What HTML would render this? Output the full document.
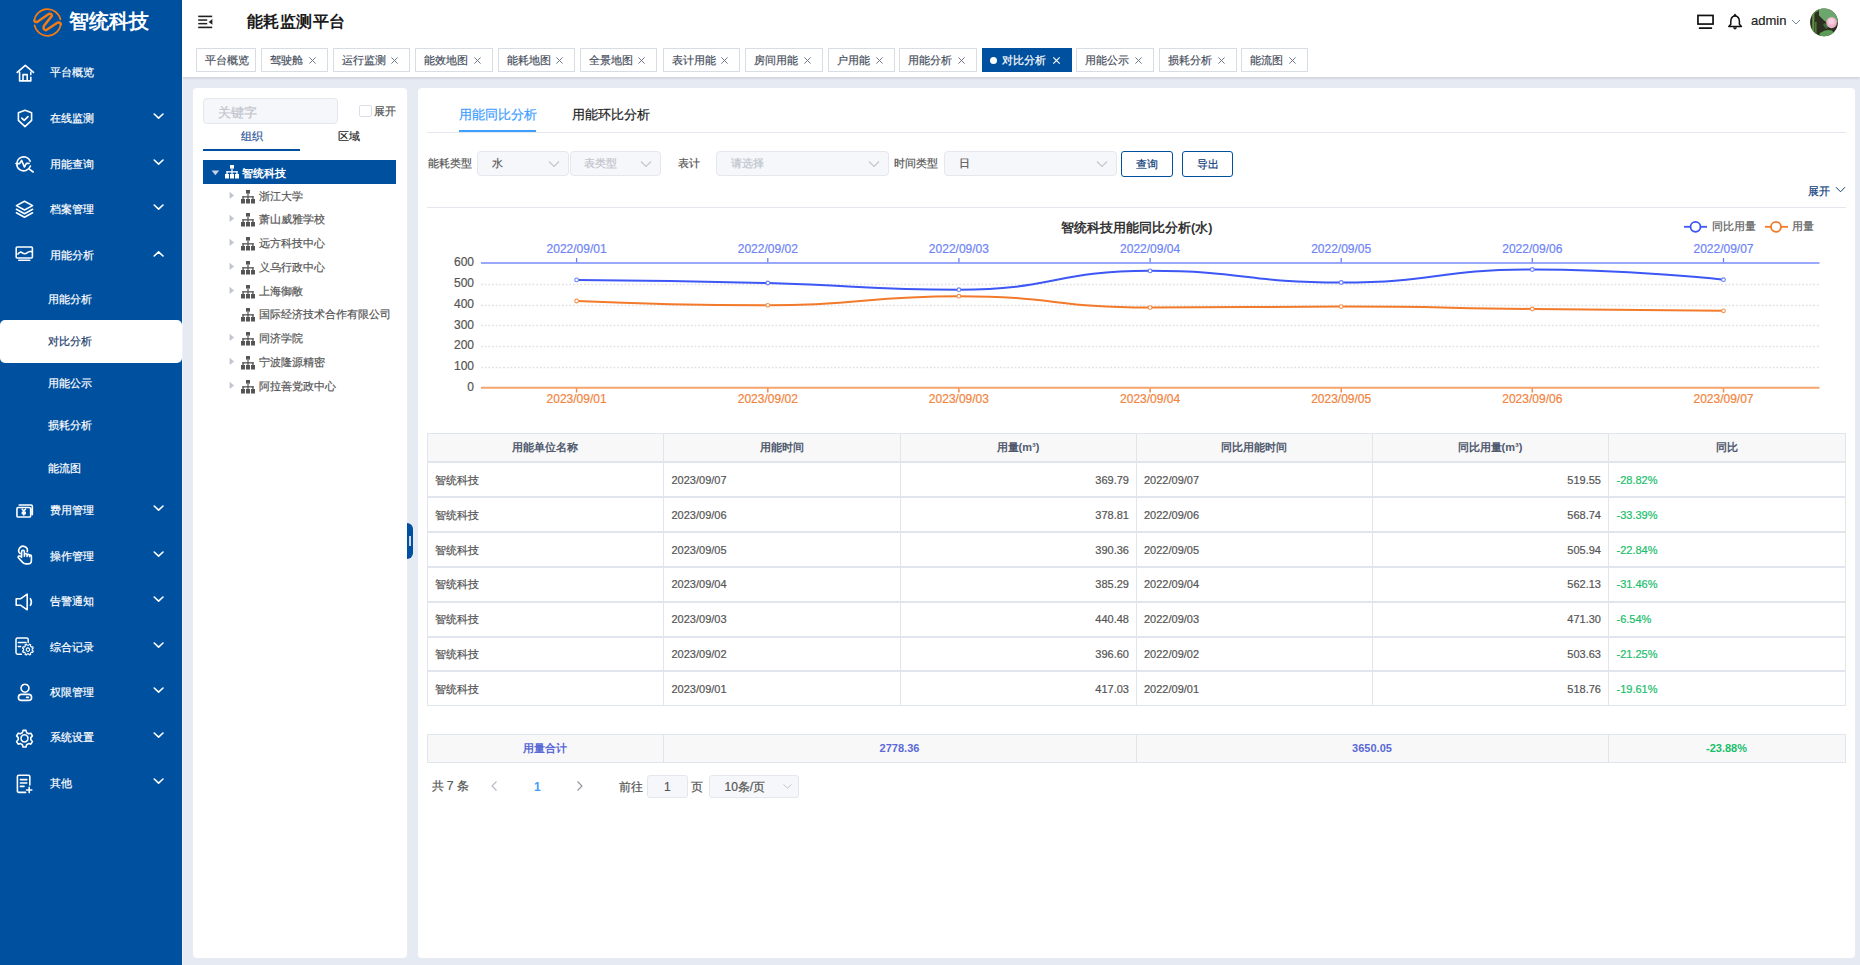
<!DOCTYPE html>
<html><head><meta charset="utf-8"><title>能耗监测平台</title>
<style>

*{box-sizing:border-box;margin:0;padding:0}
html,body{width:1860px;height:965px;overflow:hidden;background:#e6eaf3;font-family:"Liberation Sans",sans-serif;color:#606266}
.a{position:absolute}
.t{position:absolute;white-space:nowrap;line-height:1;-webkit-text-stroke:0.2px currentColor}
.t[style*="bold"]{-webkit-text-stroke:0}
#side{position:absolute;left:0;top:0;width:182px;height:965px;background:#0050a0}
#head{position:absolute;left:182px;top:0;width:1678px;height:77px;background:#fff;box-shadow:0 1px 3px 0 rgba(0,0,0,.12),0 0 3px 0 rgba(0,0,0,.04)}
.tag{position:absolute;top:48px;height:24px;border:1px solid #d8dce5;background:#fff;color:#495060;font-size:11px}
.tag .tx{position:absolute;top:5.6px;line-height:11px;white-space:nowrap;-webkit-text-stroke:0.2px currentColor}
.panel{position:absolute;background:#fff;border-radius:4px}

</style></head><body>
<div id="side"></div>
<svg class="a" style="left:28px;top:4px" width="40" height="38" viewBox="0 0 40 38" fill="none" stroke="#f47b14" stroke-linecap="round" stroke-linejoin="round">
<path d="M32.4 15.3 A13.3 13.3 0 0 0 6.3 16.6" stroke-width="1.7"/>
<path d="M6.6 21.4 A13.3 13.3 0 0 0 32.8 20" stroke-width="1.7"/>
<path d="M6.4 16.6 Q7.2 18.8 9.8 17.6 L20.4 10.2 Q23.4 8.8 23.9 11.9 L15.8 22 Q14.8 25.9 18 26.3 L29.4 18.7 Q32.3 17.9 32.8 20.2" stroke-width="2.5"/>
</svg>
<div class="t" style="left:69px;top:10px;font-size:20px;font-weight:bold;color:#fff;line-height:22px">智统科技</div>
<svg class="a" style="left:15.5px;top:63.5px;" width="19" height="19" viewBox="0 0 19 19" fill="none" stroke="#fff" stroke-width="1.6" stroke-linecap="round" stroke-linejoin="round"><path d="M1.2 8.4 L9.3 1.3 L17.5 8.4 M3.6 8.2 V16.9 H14.8 V13.4 M14.8 10.6 V8.2 M7 16.9 V10.6 H11.2 V16.9"/></svg>
<div class="t" style="left:50px;top:65.5px;font-size:11px;color:#fff;line-height:13px">平台概览</div>
<svg class="a" style="left:16.5px;top:109px;" width="16" height="19" viewBox="0 0 16 19" fill="none" stroke="#fff" stroke-width="1.6" stroke-linecap="round" stroke-linejoin="round"><path d="M8 1.2 L14.6 3.8 V11.4 L8 17.6 L1.4 11.4 V3.8 Z M4.8 9.1 L7.2 11.4 L11 7.6"/></svg>
<div class="t" style="left:50px;top:111.5px;font-size:11px;color:#fff;line-height:13px">在线监测</div>
<svg class="a" style="left:151.5px;top:112.5px;" width="13" height="7" viewBox="0 0 13 7" fill="none" stroke="#fff" stroke-width="1.6" stroke-linecap="round" stroke-linejoin="round"><path d="M2.2 1 L6.6 5.2 L11 1"/></svg>
<svg class="a" style="left:15px;top:154.5px;" width="20" height="18" viewBox="0 0 20 18" fill="none" stroke="#fff" stroke-width="1.6" stroke-linecap="round" stroke-linejoin="round"><path d="M15.2 6.2 A7 7 0 1 0 15.4 11 M1 8.6 H4.6 L6.6 5.4 L9.4 12 L11.4 8.4 H14 M13.6 13.6 L18.2 17"/></svg>
<div class="t" style="left:50px;top:157.5px;font-size:11px;color:#fff;line-height:13px">用能查询</div>
<svg class="a" style="left:151.5px;top:158.5px;" width="13" height="7" viewBox="0 0 13 7" fill="none" stroke="#fff" stroke-width="1.6" stroke-linecap="round" stroke-linejoin="round"><path d="M2.2 1 L6.6 5.2 L11 1"/></svg>
<svg class="a" style="left:15.3px;top:200px;" width="19" height="19" viewBox="0 0 19 19" fill="none" stroke="#fff" stroke-width="1.6" stroke-linecap="round" stroke-linejoin="round"><path d="M9.5 1.2 L17.6 5.6 L9.5 10 L1.4 5.6 Z M1.4 9.3 L9.5 13.7 L17.6 9.3 M1.4 12.8 L9.5 17.2 L17.6 12.8"/></svg>
<div class="t" style="left:50px;top:203.0px;font-size:11px;color:#fff;line-height:13px">档案管理</div>
<svg class="a" style="left:151.5px;top:204.0px;" width="13" height="7" viewBox="0 0 13 7" fill="none" stroke="#fff" stroke-width="1.6" stroke-linecap="round" stroke-linejoin="round"><path d="M2.2 1 L6.6 5.2 L11 1"/></svg>
<svg class="a" style="left:15.3px;top:246.3px;" width="19" height="16" viewBox="0 0 19 16" fill="none" stroke="#fff" stroke-width="1.6" stroke-linecap="round" stroke-linejoin="round"><path d="M2.2 1 H16.4 Q17.4 1 17.4 2 V11 Q17.4 12 16.4 12 H2.2 Q1.2 12 1.2 11 V2 Q1.2 1 2.2 1 Z M3 8 Q5 5 7.4 6.8 T12 6.8 T16 5.6 M3.8 14.2 H14.8"/></svg>
<div class="t" style="left:50px;top:249.0px;font-size:11px;color:#fff;line-height:13px">用能分析</div>
<svg class="a" style="left:151.5px;top:249.5px;" width="13" height="7" viewBox="0 0 13 7" fill="none" stroke="#fff" stroke-width="1.6" stroke-linecap="round" stroke-linejoin="round"><path d="M2.2 6 L6.6 1.8 L11 6"/></svg>
<svg class="a" style="left:15px;top:502.5px;" width="20" height="16" viewBox="0 0 20 16" fill="none" stroke="#fff" stroke-width="1.6" stroke-linecap="round" stroke-linejoin="round"><path d="M4.2 1.95 H16.1 Q17.35 1.95 17.35 3.2 V11.6 M2.95 4.45 H14.4 Q15.65 4.45 15.65 5.7 V12.9 Q15.65 13.95 14.4 13.95 H3.2 Q1.95 13.95 1.95 12.9 V5.7 Q1.95 4.45 3.2 4.45 Z M7.2 6.3 L8.8 8 L10.4 6.3 M8.8 8 V12 M7.3 9.3 H10.3 M7.3 10.8 H10.3"/></svg>
<div class="t" style="left:50px;top:503.5px;font-size:11px;color:#fff;line-height:13px">费用管理</div>
<svg class="a" style="left:151.5px;top:504.5px;" width="13" height="7" viewBox="0 0 13 7" fill="none" stroke="#fff" stroke-width="1.6" stroke-linecap="round" stroke-linejoin="round"><path d="M2.2 1 L6.6 5.2 L11 1"/></svg>
<svg class="a" style="left:12px;top:540px;" width="26" height="30" viewBox="0 0 26 30" fill="none" stroke="#fff" stroke-width="1.6" stroke-linecap="round" stroke-linejoin="round"><path d="M8 13.5 A4.3 4.3 0 1 1 15.2 11.8 M9.6 17.2 V11.9 Q9.6 10.3 11 10.3 Q12.4 10.3 12.4 11.9 V16.2 M12.4 14.8 Q12.4 13.7 13.8 13.7 Q15.1 13.7 15.1 14.8 V16.4 M15.1 15.4 Q15.1 14.4 16.4 14.4 Q17.6 14.4 17.6 15.4 V16.6 M17.6 16 Q17.6 15.1 18.5 15.1 Q19.4 15.1 19.4 16.2 V20.4 Q19.4 23.9 15.8 23.9 H14 Q12 23.9 10.6 22.4 L6.4 17.8 Q5.7 16.6 6.9 16.1 Q8 15.8 9.6 17.2"/></svg>
<div class="t" style="left:50px;top:549.5px;font-size:11px;color:#fff;line-height:13px">操作管理</div>
<svg class="a" style="left:151.5px;top:550.5px;" width="13" height="7" viewBox="0 0 13 7" fill="none" stroke="#fff" stroke-width="1.6" stroke-linecap="round" stroke-linejoin="round"><path d="M2.2 1 L6.6 5.2 L11 1"/></svg>
<svg class="a" style="left:15.3px;top:592.8px;" width="19" height="18" viewBox="0 0 19 18" fill="none" stroke="#fff" stroke-width="1.6" stroke-linecap="round" stroke-linejoin="round"><path d="M1.2 5.8 H5.4 L12.2 1.2 V16.8 L5.4 12.2 H1.2 Z M15.4 5.6 Q17.4 9 15.4 12.4"/></svg>
<div class="t" style="left:50px;top:594.5px;font-size:11px;color:#fff;line-height:13px">告警通知</div>
<svg class="a" style="left:151.5px;top:595.5px;" width="13" height="7" viewBox="0 0 13 7" fill="none" stroke="#fff" stroke-width="1.6" stroke-linecap="round" stroke-linejoin="round"><path d="M2.2 1 L6.6 5.2 L11 1"/></svg>
<svg class="a" style="left:12px;top:634px;" width="26" height="26" viewBox="0 0 26 26" fill="none" stroke="#fff" stroke-width="1.6" stroke-linecap="round" stroke-linejoin="round"><path d="M9.4 20.2 H5.6 Q4 20.2 4 18.6 V5.6 Q4 4 5.6 4 H14.6 Q16.2 4 16.2 5.6 V8.4 M6.3 8.6 H14 M6.3 12.4 H8.6" stroke-width="1.5"/><path stroke-width="1.15" d="M20.23 16.37 L21.31 17.06 L20.75 18.39 L19.51 18.12 L18.42 19.21 L18.69 20.45 L17.36 21.01 L16.67 19.93 L15.13 19.93 L14.44 21.01 L13.11 20.45 L13.38 19.21 L12.29 18.12 L11.05 18.39 L10.49 17.06 L11.57 16.37 L11.57 14.83 L10.49 14.14 L11.05 12.81 L12.29 13.08 L13.38 11.99 L13.11 10.75 L14.44 10.19 L15.13 11.27 L16.67 11.27 L17.36 10.19 L18.69 10.75 L18.42 11.99 L19.51 13.08 L20.75 12.81 L21.31 14.14 L20.23 14.83 Z M15.9 13.9 A1.7 1.7 0 1 1 15.89 13.9 Z"/></svg>
<div class="t" style="left:50px;top:640.5px;font-size:11px;color:#fff;line-height:13px">综合记录</div>
<svg class="a" style="left:151.5px;top:641.5px;" width="13" height="7" viewBox="0 0 13 7" fill="none" stroke="#fff" stroke-width="1.6" stroke-linecap="round" stroke-linejoin="round"><path d="M2.2 1 L6.6 5.2 L11 1"/></svg>
<svg class="a" style="left:16.5px;top:683.2px;" width="16" height="19" viewBox="0 0 16 19" fill="none" stroke="#fff" stroke-width="1.6" stroke-linecap="round" stroke-linejoin="round"><path d="M8 1.2 A4 4 0 1 1 7.99 1.2 Z M4.4 11.4 H11.6 Q14.6 11.4 14.6 14.4 Q14.6 17.4 11.6 17.4 H4.4 Q1.4 17.4 1.4 14.4 Q1.4 11.4 4.4 11.4 Z M9.6 14.4 H11.4"/></svg>
<div class="t" style="left:50px;top:685.5px;font-size:11px;color:#fff;line-height:13px">权限管理</div>
<svg class="a" style="left:151.5px;top:686.5px;" width="13" height="7" viewBox="0 0 13 7" fill="none" stroke="#fff" stroke-width="1.6" stroke-linecap="round" stroke-linejoin="round"><path d="M2.2 1 L6.6 5.2 L11 1"/></svg>
<svg class="a" style="left:15.1px;top:729px;" width="19" height="19" viewBox="0 0 19 19" fill="none" stroke="#fff" stroke-width="1.6" stroke-linecap="round" stroke-linejoin="round"><path d="M9.5 5.8 A3.6 3.6 0 1 1 9.49 5.8 Z M8 1.4 H11 L11.6 3.6 L13.6 4.8 L15.8 4.2 L17.4 6.9 L15.8 8.6 V10.8 L17.4 12.5 L15.8 15.2 L13.6 14.6 L11.6 15.8 L11 18 H8 L7.4 15.8 L5.4 14.6 L3.2 15.2 L1.6 12.5 L3.2 10.8 V8.6 L1.6 6.9 L3.2 4.2 L5.4 4.8 L7.4 3.6 Z"/></svg>
<div class="t" style="left:50px;top:731.1px;font-size:11px;color:#fff;line-height:13px">系统设置</div>
<svg class="a" style="left:151.5px;top:732.1px;" width="13" height="7" viewBox="0 0 13 7" fill="none" stroke="#fff" stroke-width="1.6" stroke-linecap="round" stroke-linejoin="round"><path d="M2.2 1 L6.6 5.2 L11 1"/></svg>
<svg class="a" style="left:15.7px;top:773.9px;" width="18" height="20" viewBox="0 0 18 20" fill="none" stroke="#fff" stroke-width="1.6" stroke-linecap="round" stroke-linejoin="round"><path d="M9.6 18.4 H2.8 Q1.4 18.4 1.4 17 V2.6 Q1.4 1.2 2.8 1.2 H12.4 Q13.8 1.2 13.8 2.6 V11 M4.4 5.6 H10.8 M4.4 9 H10.8 M4.4 12.4 H8 M13.2 13.4 V18.6 M10.6 16 H15.8"/></svg>
<div class="t" style="left:50px;top:776.5px;font-size:11px;color:#fff;line-height:13px">其他</div>
<svg class="a" style="left:151.5px;top:777.5px;" width="13" height="7" viewBox="0 0 13 7" fill="none" stroke="#fff" stroke-width="1.6" stroke-linecap="round" stroke-linejoin="round"><path d="M2.2 1 L6.6 5.2 L11 1"/></svg>
<div class="a" style="left:0;top:320px;width:182px;height:43px;background:#fff;border-radius:5px"></div>
<div class="t" style="left:47.7px;top:292.5px;font-size:11px;color:#fff;line-height:13px">用能分析</div>
<div class="t" style="left:47.7px;top:334.5px;font-size:11px;color:#1d3d6e;line-height:13px">对比分析</div>
<div class="t" style="left:47.7px;top:376.5px;font-size:11px;color:#fff;line-height:13px">用能公示</div>
<div class="t" style="left:47.7px;top:418.5px;font-size:11px;color:#fff;line-height:13px">损耗分析</div>
<div class="t" style="left:47.7px;top:461.5px;font-size:11px;color:#fff;line-height:13px">能流图</div>
<div id="head"></div>
<div class="a" style="left:182px;top:77px;width:1px;height:888px;background:#f1f3f8"></div>
<svg class="a" style="left:197px;top:14px" width="17" height="16" viewBox="0 0 17 16" fill="#222">
<rect x="1.2" y="1.6" width="14" height="1.6"/><rect x="1.2" y="12.6" width="14" height="1.6"/>
<rect x="1.2" y="5.3" width="9" height="1.5"/><rect x="1.2" y="8.9" width="9" height="1.5"/>
<path d="M15.4 5 L11.6 7.9 L15.4 10.8 Z"/></svg>
<div class="t" style="left:246.5px;top:11px;font-size:16.3px;letter-spacing:0.6px;font-weight:bold;color:#1b1b1b;line-height:20px">能耗监测平台</div>
<svg class="a" style="left:1696px;top:13px" width="20" height="18" viewBox="0 0 20 18" fill="none" stroke="#111" stroke-width="1.7">
<rect x="1.95" y="2.45" width="15.1" height="8.6"/><path d="M3.6 15.2 H15.4" stroke-width="1.7" stroke-linecap="round"/></svg>
<svg class="a" style="left:1726px;top:13px" width="18" height="19" viewBox="0 0 18 19" fill="none" stroke="#111" stroke-width="1.5" stroke-linejoin="round">
<path d="M9 2.8 Q5.2 3.4 4.8 8 V11.2 L2.8 13.4 H15.4 L13.4 11.2 V8 Q13 3.4 9 2.8 Z"/><path d="M9 1.3 L10 2.9 H8 Z" stroke-width="1.2"/><path d="M7.7 14.2 Q9 17.2 10.3 14.2"/></svg>
<div class="t" style="left:1751px;top:14px;font-size:13px;color:#222;line-height:14px">admin</div>
<svg class="a" style="left:1791px;top:18px" width="10" height="8" viewBox="0 0 10 8" fill="none" stroke="#7a8699" stroke-width="1"><path d="M1 2 L5 6 L9 2"/></svg>
<svg class="a" style="left:1809px;top:8px" width="30" height="30" viewBox="0 0 30 30">
<defs><clipPath id="av"><circle cx="15" cy="14.4" r="13.9"/></clipPath></defs>
<g clip-path="url(#av)">
<rect width="30" height="30" fill="#2d3020"/>
<path d="M10 0 H30 V15 Q24 12.5 19 15.5 Q14 12 10 7.5 Z" fill="#6ca66c"/>
<path d="M11 25 Q17 20.5 23 22.5 L28 30 H9 Z" fill="#5c9b58"/>
<path d="M0 0 H10 V3 Q6 4 4 8 L0 8Z" fill="#4f7d3e"/>
<rect x="3.2" y="5" width="2.2" height="22" fill="#5e8f45"/>
<rect x="6" y="14" width="1.6" height="14" fill="#4d7a3a"/>
<path d="M14 16 Q17 14 20 17 L18 21 Q15 20 14 16Z" fill="#3f6a3a"/>
<ellipse cx="22.6" cy="14.6" rx="5.3" ry="5.6" fill="#eeb3cb"/>
<ellipse cx="22.4" cy="13.4" rx="3.2" ry="3.2" fill="#f7cfe0"/>
</g></svg>
<div class="tag" style="left:196px;width:60px"><div class="tx" style="left:8px">平台概览</div></div>
<div class="tag" style="left:261px;width:67px"><div class="tx" style="left:8px">驾驶舱</div><svg class="a" style="right:10.5px;top:6.6px" width="9" height="9" viewBox="0 0 9 9" stroke="#6a7280" stroke-width="0.95"><path d="M1.4 1.4 L7.6 7.6 M7.6 1.4 L1.4 7.6"/></svg></div>
<div class="tag" style="left:333px;width:77px"><div class="tx" style="left:8px">运行监测</div><svg class="a" style="right:10.5px;top:6.6px" width="9" height="9" viewBox="0 0 9 9" stroke="#6a7280" stroke-width="0.95"><path d="M1.4 1.4 L7.6 7.6 M7.6 1.4 L1.4 7.6"/></svg></div>
<div class="tag" style="left:415px;width:78px"><div class="tx" style="left:8px">能效地图</div><svg class="a" style="right:10.5px;top:6.6px" width="9" height="9" viewBox="0 0 9 9" stroke="#6a7280" stroke-width="0.95"><path d="M1.4 1.4 L7.6 7.6 M7.6 1.4 L1.4 7.6"/></svg></div>
<div class="tag" style="left:498px;width:77px"><div class="tx" style="left:8px">能耗地图</div><svg class="a" style="right:10.5px;top:6.6px" width="9" height="9" viewBox="0 0 9 9" stroke="#6a7280" stroke-width="0.95"><path d="M1.4 1.4 L7.6 7.6 M7.6 1.4 L1.4 7.6"/></svg></div>
<div class="tag" style="left:580px;width:77px"><div class="tx" style="left:8px">全景地图</div><svg class="a" style="right:10.5px;top:6.6px" width="9" height="9" viewBox="0 0 9 9" stroke="#6a7280" stroke-width="0.95"><path d="M1.4 1.4 L7.6 7.6 M7.6 1.4 L1.4 7.6"/></svg></div>
<div class="tag" style="left:663px;width:77px"><div class="tx" style="left:8px">表计用能</div><svg class="a" style="right:10.5px;top:6.6px" width="9" height="9" viewBox="0 0 9 9" stroke="#6a7280" stroke-width="0.95"><path d="M1.4 1.4 L7.6 7.6 M7.6 1.4 L1.4 7.6"/></svg></div>
<div class="tag" style="left:745px;width:78px"><div class="tx" style="left:8px">房间用能</div><svg class="a" style="right:10.5px;top:6.6px" width="9" height="9" viewBox="0 0 9 9" stroke="#6a7280" stroke-width="0.95"><path d="M1.4 1.4 L7.6 7.6 M7.6 1.4 L1.4 7.6"/></svg></div>
<div class="tag" style="left:828px;width:67px"><div class="tx" style="left:8px">户用能</div><svg class="a" style="right:10.5px;top:6.6px" width="9" height="9" viewBox="0 0 9 9" stroke="#6a7280" stroke-width="0.95"><path d="M1.4 1.4 L7.6 7.6 M7.6 1.4 L1.4 7.6"/></svg></div>
<div class="tag" style="left:899px;width:78px"><div class="tx" style="left:8px">用能分析</div><svg class="a" style="right:10.5px;top:6.6px" width="9" height="9" viewBox="0 0 9 9" stroke="#6a7280" stroke-width="0.95"><path d="M1.4 1.4 L7.6 7.6 M7.6 1.4 L1.4 7.6"/></svg></div>
<div class="tag" style="left:982px;width:90px;background:#0050a0;border-color:#0050a0;color:#fff"><div class="a" style="left:7px;top:8px;width:7px;height:7px;border-radius:50%;background:#fff"></div><div class="tx" style="left:19px">对比分析</div><svg class="a" style="left:69px;top:7px" width="9" height="9" viewBox="0 0 9 9" stroke="#fff" stroke-width="1.2"><path d="M1.3 1.3 L7.7 7.7 M7.7 1.3 L1.3 7.7"/></svg></div>
<div class="tag" style="left:1076px;width:78px"><div class="tx" style="left:8px">用能公示</div><svg class="a" style="right:10.5px;top:6.6px" width="9" height="9" viewBox="0 0 9 9" stroke="#6a7280" stroke-width="0.95"><path d="M1.4 1.4 L7.6 7.6 M7.6 1.4 L1.4 7.6"/></svg></div>
<div class="tag" style="left:1159px;width:78px"><div class="tx" style="left:8px">损耗分析</div><svg class="a" style="right:10.5px;top:6.6px" width="9" height="9" viewBox="0 0 9 9" stroke="#6a7280" stroke-width="0.95"><path d="M1.4 1.4 L7.6 7.6 M7.6 1.4 L1.4 7.6"/></svg></div>
<div class="tag" style="left:1241px;width:67px"><div class="tx" style="left:8px">能流图</div><svg class="a" style="right:10.5px;top:6.6px" width="9" height="9" viewBox="0 0 9 9" stroke="#6a7280" stroke-width="0.95"><path d="M1.4 1.4 L7.6 7.6 M7.6 1.4 L1.4 7.6"/></svg></div>
<div class="panel" style="left:193px;top:88px;width:214px;height:870px"></div>
<div class="a" style="left:203px;top:98px;width:135px;height:26px;background:#f5f7fa;border:1px solid #e4e7ed;border-radius:4px"></div>
<div class="t" style="left:218px;top:105px;font-size:13px;color:#c0c4cc;line-height:15px">关键字</div>
<div class="a" style="left:359px;top:104.5px;width:12.5px;height:12.5px;border:1px solid #dcdfe6;border-radius:2px;background:#fff"></div>
<div class="t" style="left:374px;top:104.5px;font-size:11px;color:#555;line-height:13px">展开</div>
<div class="t" style="left:240.5px;top:130px;font-size:11px;color:#2c5697;line-height:13px">组织</div>
<div class="t" style="left:337.5px;top:130px;font-size:11px;color:#222;line-height:13px">区域</div>
<div class="a" style="left:203px;top:149px;width:97px;height:2px;background:#0050a0"></div>
<div class="a" style="left:203px;top:160px;width:193px;height:24px;background:#0050a0"></div>
<svg class="a" style="left:211px;top:170px" width="9" height="6" viewBox="0 0 9 6" fill="#c9d3e3"><path d="M0.6 0.6 H8.2 L4.4 5.2 Z"/></svg>
<svg class="a" style="left:224.5px;top:165px" width="14" height="14" viewBox="0 0 14 14" fill="#fff"><rect x="5" y="0" width="4" height="3.6"/><rect x="6.4" y="3.6" width="1.2" height="3"/><rect x="1.4" y="6.2" width="11.2" height="1.3"/><rect x="1.4" y="6.2" width="1.3" height="3"/><rect x="6.4" y="6.2" width="1.2" height="3"/><rect x="11.3" y="6.2" width="1.3" height="3"/><rect x="0" y="9" width="4" height="4.5"/><rect x="5" y="9" width="4" height="4.5"/><rect x="10" y="9" width="4" height="4.5"/></svg>
<div class="t" style="left:242px;top:166.5px;font-size:11px;font-weight:bold;color:#fff;line-height:13px">智统科技</div>
<svg class="a" style="left:228.5px;top:190.50px" width="6" height="9" viewBox="0 0 6 9" fill="#c0c4cc"><path d="M0.6 0.8 L5 4.4 L0.6 8 Z"/></svg>
<svg class="a" style="left:241px;top:189.5px" width="14" height="14" viewBox="0 0 14 14" fill="#555"><rect x="5" y="0" width="4" height="3.6"/><rect x="6.4" y="3.6" width="1.2" height="3"/><rect x="1.4" y="6.2" width="11.2" height="1.3"/><rect x="1.4" y="6.2" width="1.3" height="3"/><rect x="6.4" y="6.2" width="1.2" height="3"/><rect x="11.3" y="6.2" width="1.3" height="3"/><rect x="0" y="9" width="4" height="4.5"/><rect x="5" y="9" width="4" height="4.5"/><rect x="10" y="9" width="4" height="4.5"/></svg>
<div class="t" style="left:258.5px;top:189.50px;font-size:11px;color:#555;line-height:13px">浙江大学</div>
<svg class="a" style="left:228.5px;top:214.28px" width="6" height="9" viewBox="0 0 6 9" fill="#c0c4cc"><path d="M0.6 0.8 L5 4.4 L0.6 8 Z"/></svg>
<svg class="a" style="left:241px;top:213.28px" width="14" height="14" viewBox="0 0 14 14" fill="#555"><rect x="5" y="0" width="4" height="3.6"/><rect x="6.4" y="3.6" width="1.2" height="3"/><rect x="1.4" y="6.2" width="11.2" height="1.3"/><rect x="1.4" y="6.2" width="1.3" height="3"/><rect x="6.4" y="6.2" width="1.2" height="3"/><rect x="11.3" y="6.2" width="1.3" height="3"/><rect x="0" y="9" width="4" height="4.5"/><rect x="5" y="9" width="4" height="4.5"/><rect x="10" y="9" width="4" height="4.5"/></svg>
<div class="t" style="left:258.5px;top:213.28px;font-size:11px;color:#555;line-height:13px">萧山威雅学校</div>
<svg class="a" style="left:228.5px;top:238.06px" width="6" height="9" viewBox="0 0 6 9" fill="#c0c4cc"><path d="M0.6 0.8 L5 4.4 L0.6 8 Z"/></svg>
<svg class="a" style="left:241px;top:237.06px" width="14" height="14" viewBox="0 0 14 14" fill="#555"><rect x="5" y="0" width="4" height="3.6"/><rect x="6.4" y="3.6" width="1.2" height="3"/><rect x="1.4" y="6.2" width="11.2" height="1.3"/><rect x="1.4" y="6.2" width="1.3" height="3"/><rect x="6.4" y="6.2" width="1.2" height="3"/><rect x="11.3" y="6.2" width="1.3" height="3"/><rect x="0" y="9" width="4" height="4.5"/><rect x="5" y="9" width="4" height="4.5"/><rect x="10" y="9" width="4" height="4.5"/></svg>
<div class="t" style="left:258.5px;top:237.06px;font-size:11px;color:#555;line-height:13px">远方科技中心</div>
<svg class="a" style="left:228.5px;top:261.84px" width="6" height="9" viewBox="0 0 6 9" fill="#c0c4cc"><path d="M0.6 0.8 L5 4.4 L0.6 8 Z"/></svg>
<svg class="a" style="left:241px;top:260.84000000000003px" width="14" height="14" viewBox="0 0 14 14" fill="#555"><rect x="5" y="0" width="4" height="3.6"/><rect x="6.4" y="3.6" width="1.2" height="3"/><rect x="1.4" y="6.2" width="11.2" height="1.3"/><rect x="1.4" y="6.2" width="1.3" height="3"/><rect x="6.4" y="6.2" width="1.2" height="3"/><rect x="11.3" y="6.2" width="1.3" height="3"/><rect x="0" y="9" width="4" height="4.5"/><rect x="5" y="9" width="4" height="4.5"/><rect x="10" y="9" width="4" height="4.5"/></svg>
<div class="t" style="left:258.5px;top:260.84px;font-size:11px;color:#555;line-height:13px">义乌行政中心</div>
<svg class="a" style="left:228.5px;top:285.62px" width="6" height="9" viewBox="0 0 6 9" fill="#c0c4cc"><path d="M0.6 0.8 L5 4.4 L0.6 8 Z"/></svg>
<svg class="a" style="left:241px;top:284.62px" width="14" height="14" viewBox="0 0 14 14" fill="#555"><rect x="5" y="0" width="4" height="3.6"/><rect x="6.4" y="3.6" width="1.2" height="3"/><rect x="1.4" y="6.2" width="11.2" height="1.3"/><rect x="1.4" y="6.2" width="1.3" height="3"/><rect x="6.4" y="6.2" width="1.2" height="3"/><rect x="11.3" y="6.2" width="1.3" height="3"/><rect x="0" y="9" width="4" height="4.5"/><rect x="5" y="9" width="4" height="4.5"/><rect x="10" y="9" width="4" height="4.5"/></svg>
<div class="t" style="left:258.5px;top:284.62px;font-size:11px;color:#555;line-height:13px">上海御敞</div>
<svg class="a" style="left:241px;top:308.4px" width="14" height="14" viewBox="0 0 14 14" fill="#555"><rect x="5" y="0" width="4" height="3.6"/><rect x="6.4" y="3.6" width="1.2" height="3"/><rect x="1.4" y="6.2" width="11.2" height="1.3"/><rect x="1.4" y="6.2" width="1.3" height="3"/><rect x="6.4" y="6.2" width="1.2" height="3"/><rect x="11.3" y="6.2" width="1.3" height="3"/><rect x="0" y="9" width="4" height="4.5"/><rect x="5" y="9" width="4" height="4.5"/><rect x="10" y="9" width="4" height="4.5"/></svg>
<div class="t" style="left:258.5px;top:308.40px;font-size:11px;color:#555;line-height:13px">国际经济技术合作有限公司</div>
<svg class="a" style="left:228.5px;top:333.18px" width="6" height="9" viewBox="0 0 6 9" fill="#c0c4cc"><path d="M0.6 0.8 L5 4.4 L0.6 8 Z"/></svg>
<svg class="a" style="left:241px;top:332.18px" width="14" height="14" viewBox="0 0 14 14" fill="#555"><rect x="5" y="0" width="4" height="3.6"/><rect x="6.4" y="3.6" width="1.2" height="3"/><rect x="1.4" y="6.2" width="11.2" height="1.3"/><rect x="1.4" y="6.2" width="1.3" height="3"/><rect x="6.4" y="6.2" width="1.2" height="3"/><rect x="11.3" y="6.2" width="1.3" height="3"/><rect x="0" y="9" width="4" height="4.5"/><rect x="5" y="9" width="4" height="4.5"/><rect x="10" y="9" width="4" height="4.5"/></svg>
<div class="t" style="left:258.5px;top:332.18px;font-size:11px;color:#555;line-height:13px">同济学院</div>
<svg class="a" style="left:228.5px;top:356.96px" width="6" height="9" viewBox="0 0 6 9" fill="#c0c4cc"><path d="M0.6 0.8 L5 4.4 L0.6 8 Z"/></svg>
<svg class="a" style="left:241px;top:355.96000000000004px" width="14" height="14" viewBox="0 0 14 14" fill="#555"><rect x="5" y="0" width="4" height="3.6"/><rect x="6.4" y="3.6" width="1.2" height="3"/><rect x="1.4" y="6.2" width="11.2" height="1.3"/><rect x="1.4" y="6.2" width="1.3" height="3"/><rect x="6.4" y="6.2" width="1.2" height="3"/><rect x="11.3" y="6.2" width="1.3" height="3"/><rect x="0" y="9" width="4" height="4.5"/><rect x="5" y="9" width="4" height="4.5"/><rect x="10" y="9" width="4" height="4.5"/></svg>
<div class="t" style="left:258.5px;top:355.96px;font-size:11px;color:#555;line-height:13px">宁波隆源精密</div>
<svg class="a" style="left:228.5px;top:380.74px" width="6" height="9" viewBox="0 0 6 9" fill="#c0c4cc"><path d="M0.6 0.8 L5 4.4 L0.6 8 Z"/></svg>
<svg class="a" style="left:241px;top:379.74px" width="14" height="14" viewBox="0 0 14 14" fill="#555"><rect x="5" y="0" width="4" height="3.6"/><rect x="6.4" y="3.6" width="1.2" height="3"/><rect x="1.4" y="6.2" width="11.2" height="1.3"/><rect x="1.4" y="6.2" width="1.3" height="3"/><rect x="6.4" y="6.2" width="1.2" height="3"/><rect x="11.3" y="6.2" width="1.3" height="3"/><rect x="0" y="9" width="4" height="4.5"/><rect x="5" y="9" width="4" height="4.5"/><rect x="10" y="9" width="4" height="4.5"/></svg>
<div class="t" style="left:258.5px;top:379.74px;font-size:11px;color:#555;line-height:13px">阿拉善党政中心</div>
<div class="panel" style="left:418px;top:88px;width:1437px;height:870px"></div>
<div class="a" style="left:407px;top:523px;width:6px;height:36px;background:#0050a0;border-radius:0 6px 6px 0"></div>
<div class="a" style="left:409px;top:535.5px;width:1.8px;height:10.5px;background:#c9d6ea"></div>
<div class="t" style="left:459px;top:106.5px;font-size:13px;color:#409eff;line-height:15px">用能同比分析</div>
<div class="t" style="left:572px;top:106.5px;font-size:13px;color:#222;line-height:15px">用能环比分析</div>
<div class="a" style="left:427px;top:132px;width:1419px;height:1px;background:#e4e7ed"></div>
<div class="a" style="left:459px;top:129.5px;width:77px;height:2px;background:#409eff"></div>
<div class="t" style="left:427.5px;top:157px;font-size:11px;color:#555;line-height:13px">能耗类型</div>
<div class="a" style="left:477px;top:151px;width:91.5px;height:24.5px;background:#f5f7fa;border:1px solid #e4e7ed;border-radius:4px"></div>
<div class="t" style="left:491.5px;top:157px;font-size:11px;color:#555;line-height:13px">水</div>
<svg class="a" style="left:547.5px;top:159.5px" width="12" height="8" viewBox="0 0 12 8" fill="none" stroke="#c0c4cc" stroke-width="1.1"><path d="M1 1.5 L6 6.5 L11 1.5"/></svg>
<div class="a" style="left:569.5px;top:151px;width:91.5px;height:24.5px;background:#f5f7fa;border:1px solid #e4e7ed;border-radius:4px"></div>
<div class="t" style="left:584.0px;top:157px;font-size:11px;color:#c0c4cc;line-height:13px">表类型</div>
<svg class="a" style="left:639.5px;top:159.5px" width="12" height="8" viewBox="0 0 12 8" fill="none" stroke="#c0c4cc" stroke-width="1.1"><path d="M1 1.5 L6 6.5 L11 1.5"/></svg>
<div class="t" style="left:677.5px;top:157px;font-size:11px;color:#555;line-height:13px">表计</div>
<div class="a" style="left:716px;top:151px;width:173px;height:24.5px;background:#f5f7fa;border:1px solid #e4e7ed;border-radius:4px"></div>
<div class="t" style="left:730.5px;top:157px;font-size:11px;color:#c0c4cc;line-height:13px">请选择</div>
<svg class="a" style="left:867.5px;top:159.5px" width="12" height="8" viewBox="0 0 12 8" fill="none" stroke="#c0c4cc" stroke-width="1.1"><path d="M1 1.5 L6 6.5 L11 1.5"/></svg>
<div class="t" style="left:894px;top:157px;font-size:11px;color:#555;line-height:13px">时间类型</div>
<div class="a" style="left:944px;top:151px;width:173px;height:24.5px;background:#f5f7fa;border:1px solid #e4e7ed;border-radius:4px"></div>
<div class="t" style="left:958.5px;top:157px;font-size:11px;color:#555;line-height:13px">日</div>
<svg class="a" style="left:1095.5px;top:159.5px" width="12" height="8" viewBox="0 0 12 8" fill="none" stroke="#c0c4cc" stroke-width="1.1"><path d="M1 1.5 L6 6.5 L11 1.5"/></svg>
<div class="a" style="left:1121px;top:151px;width:52px;height:25.5px;border:1.5px solid #0050a0;border-radius:3px;background:#fff"></div>
<div class="t" style="left:1121px;width:52px;text-align:center;top:157.5px;font-size:11px;color:#0f3d7a;line-height:13px">查询</div>
<div class="a" style="left:1182px;top:151px;width:51px;height:25.5px;border:1.5px solid #0050a0;border-radius:3px;background:#fff"></div>
<div class="t" style="left:1182px;width:51px;text-align:center;top:157.5px;font-size:11px;color:#0f3d7a;line-height:13px">导出</div>
<div class="a" style="left:427px;top:207px;width:1419px;height:1px;background:#e4e7ed"></div>
<div class="t" style="left:1808px;top:184.5px;font-size:11px;color:#0f3d7a;line-height:13px">展开</div>
<svg class="a" style="left:1835px;top:186px" width="11" height="8" viewBox="0 0 11 8" fill="none" stroke="#0f3d7a" stroke-width="1"><path d="M1 1.2 L5.5 5.8 L10 1.2"/></svg>
<svg class="a" style="left:0;top:0" width="1860" height="965" viewBox="0 0 1860 965" fill="none">
<path d="M481 367.5 H1819.5" stroke="#e2e2e2" stroke-width="1.7" stroke-dasharray="1.84 1.84"/>
<path d="M481 346.5 H1819.5" stroke="#e2e2e2" stroke-width="1.7" stroke-dasharray="1.84 1.84"/>
<path d="M481 325.5 H1819.5" stroke="#e2e2e2" stroke-width="1.7" stroke-dasharray="1.84 1.84"/>
<path d="M481 305.5 H1819.5" stroke="#e2e2e2" stroke-width="1.7" stroke-dasharray="1.84 1.84"/>
<path d="M481 284.5 H1819.5" stroke="#e2e2e2" stroke-width="1.7" stroke-dasharray="1.84 1.84"/>
<path d="M481 263 H1819.5" stroke="#9aa8fb" stroke-width="2"/>
<path d="M481 387.8 H1819.5" stroke="#f6a46e" stroke-width="2"/>
<path d="M576.6 258 V262.5" stroke="#6c80f7" stroke-width="1.3"/>
<path d="M576.6 388.5 V392.5" stroke="#f3894a" stroke-width="1.5"/>
<path d="M767.8 258 V262.5" stroke="#6c80f7" stroke-width="1.3"/>
<path d="M767.8 388.5 V392.5" stroke="#f3894a" stroke-width="1.5"/>
<path d="M958.9 258 V262.5" stroke="#6c80f7" stroke-width="1.3"/>
<path d="M958.9 388.5 V392.5" stroke="#f3894a" stroke-width="1.5"/>
<path d="M1150.1 258 V262.5" stroke="#6c80f7" stroke-width="1.3"/>
<path d="M1150.1 388.5 V392.5" stroke="#f3894a" stroke-width="1.5"/>
<path d="M1341.2 258 V262.5" stroke="#6c80f7" stroke-width="1.3"/>
<path d="M1341.2 388.5 V392.5" stroke="#f3894a" stroke-width="1.5"/>
<path d="M1532.3 258 V262.5" stroke="#6c80f7" stroke-width="1.3"/>
<path d="M1532.3 388.5 V392.5" stroke="#f3894a" stroke-width="1.5"/>
<path d="M1723.5 258 V262.5" stroke="#6c80f7" stroke-width="1.3"/>
<path d="M1723.5 388.5 V392.5" stroke="#f3894a" stroke-width="1.5"/>
<path d="M576.60 279.88 C576.60 279.88 672.20 280.56 767.75 283.03 C863.35 285.50 863.53 289.75 958.90 289.75 C1054.68 289.75 1054.33 270.87 1150.05 270.87 C1245.48 270.87 1245.65 282.55 1341.20 282.55 C1436.80 282.55 1436.73 269.50 1532.35 269.50 C1627.88 269.50 1723.50 279.72 1723.50 279.72" stroke="#3c57f6" stroke-width="2"/>
<path d="M576.60 301.03 C576.60 301.03 672.22 305.27 767.75 305.27 C863.37 305.27 863.36 296.15 958.90 296.15 C1054.51 296.15 1054.39 307.62 1150.05 307.62 C1245.54 307.62 1245.63 306.57 1341.20 306.57 C1436.78 306.57 1436.77 307.90 1532.35 308.97 C1627.92 310.04 1723.50 310.85 1723.50 310.85" stroke="#f27a2a" stroke-width="2"/>
<circle cx="576.6" cy="279.9" r="1.85" fill="#fff" stroke="#6a80f7" stroke-width="1.1"/>
<circle cx="767.8" cy="283.0" r="1.85" fill="#fff" stroke="#6a80f7" stroke-width="1.1"/>
<circle cx="958.9" cy="289.7" r="1.85" fill="#fff" stroke="#6a80f7" stroke-width="1.1"/>
<circle cx="1150.1" cy="270.9" r="1.85" fill="#fff" stroke="#6a80f7" stroke-width="1.1"/>
<circle cx="1341.2" cy="282.5" r="1.85" fill="#fff" stroke="#6a80f7" stroke-width="1.1"/>
<circle cx="1532.3" cy="269.5" r="1.85" fill="#fff" stroke="#6a80f7" stroke-width="1.1"/>
<circle cx="1723.5" cy="279.7" r="1.85" fill="#fff" stroke="#6a80f7" stroke-width="1.1"/>
<circle cx="576.6" cy="301.0" r="1.85" fill="#fff" stroke="#f4914f" stroke-width="1.1"/>
<circle cx="767.8" cy="305.3" r="1.85" fill="#fff" stroke="#f4914f" stroke-width="1.1"/>
<circle cx="958.9" cy="296.2" r="1.85" fill="#fff" stroke="#f4914f" stroke-width="1.1"/>
<circle cx="1150.1" cy="307.6" r="1.85" fill="#fff" stroke="#f4914f" stroke-width="1.1"/>
<circle cx="1341.2" cy="306.6" r="1.85" fill="#fff" stroke="#f4914f" stroke-width="1.1"/>
<circle cx="1532.3" cy="309.0" r="1.85" fill="#fff" stroke="#f4914f" stroke-width="1.1"/>
<circle cx="1723.5" cy="310.8" r="1.85" fill="#fff" stroke="#f4914f" stroke-width="1.1"/>
<path d="M1684 226.8 H1707" stroke="#3c57f6" stroke-width="1.8"/><circle cx="1695.5" cy="226.8" r="5" fill="#fff" stroke="#3c57f6" stroke-width="1.8"/>
<path d="M1765 226.8 H1788" stroke="#f27a2a" stroke-width="1.8"/><circle cx="1776" cy="226.8" r="5" fill="#fff" stroke="#f27a2a" stroke-width="1.8"/>
</svg>
<div class="t" style="left:1711.5px;top:220px;font-size:11px;color:#5e5e5e;line-height:13px">同比用量</div>
<div class="t" style="left:1792px;top:220px;font-size:11px;color:#5e5e5e;line-height:13px">用量</div>
<div class="t" style="left:1061px;top:220px;font-size:12.5px;font-weight:bold;color:#333;line-height:16px">智统科技用能同比分析(水)</div>
<div class="t" style="left:536.6px;width:80px;text-align:center;top:241.5px;font-size:12px;color:#6e84f6;line-height:14px">2022/09/01</div>
<div class="t" style="left:536.6px;width:80px;text-align:center;top:391.5px;font-size:12px;color:#f2843e;line-height:14px">2023/09/01</div>
<div class="t" style="left:727.8px;width:80px;text-align:center;top:241.5px;font-size:12px;color:#6e84f6;line-height:14px">2022/09/02</div>
<div class="t" style="left:727.8px;width:80px;text-align:center;top:391.5px;font-size:12px;color:#f2843e;line-height:14px">2023/09/02</div>
<div class="t" style="left:918.9px;width:80px;text-align:center;top:241.5px;font-size:12px;color:#6e84f6;line-height:14px">2022/09/03</div>
<div class="t" style="left:918.9px;width:80px;text-align:center;top:391.5px;font-size:12px;color:#f2843e;line-height:14px">2023/09/03</div>
<div class="t" style="left:1110.1px;width:80px;text-align:center;top:241.5px;font-size:12px;color:#6e84f6;line-height:14px">2022/09/04</div>
<div class="t" style="left:1110.1px;width:80px;text-align:center;top:391.5px;font-size:12px;color:#f2843e;line-height:14px">2023/09/04</div>
<div class="t" style="left:1301.2px;width:80px;text-align:center;top:241.5px;font-size:12px;color:#6e84f6;line-height:14px">2022/09/05</div>
<div class="t" style="left:1301.2px;width:80px;text-align:center;top:391.5px;font-size:12px;color:#f2843e;line-height:14px">2023/09/05</div>
<div class="t" style="left:1492.3px;width:80px;text-align:center;top:241.5px;font-size:12px;color:#6e84f6;line-height:14px">2022/09/06</div>
<div class="t" style="left:1492.3px;width:80px;text-align:center;top:391.5px;font-size:12px;color:#f2843e;line-height:14px">2023/09/06</div>
<div class="t" style="left:1683.5px;width:80px;text-align:center;top:241.5px;font-size:12px;color:#6e84f6;line-height:14px">2022/09/07</div>
<div class="t" style="left:1683.5px;width:80px;text-align:center;top:391.5px;font-size:12px;color:#f2843e;line-height:14px">2023/09/07</div>
<div class="t" style="left:400px;width:74px;text-align:right;top:379.9px;font-size:12px;color:#555;line-height:14px">0</div>
<div class="t" style="left:400px;width:74px;text-align:right;top:359.1px;font-size:12px;color:#555;line-height:14px">100</div>
<div class="t" style="left:400px;width:74px;text-align:right;top:338.3px;font-size:12px;color:#555;line-height:14px">200</div>
<div class="t" style="left:400px;width:74px;text-align:right;top:317.6px;font-size:12px;color:#555;line-height:14px">300</div>
<div class="t" style="left:400px;width:74px;text-align:right;top:296.8px;font-size:12px;color:#555;line-height:14px">400</div>
<div class="t" style="left:400px;width:74px;text-align:right;top:276.0px;font-size:12px;color:#555;line-height:14px">500</div>
<div class="t" style="left:400px;width:74px;text-align:right;top:255.2px;font-size:12px;color:#555;line-height:14px">600</div>
<div class="a" style="left:427px;top:433px;width:1419px;height:28px;background:#f8f8f9"></div>
<div class="a" style="left:427px;top:433px;width:1419px;height:1px;background:#e1e6ee"></div>
<div class="a" style="left:427px;top:433px;width:1px;height:273px;background:#e1e6ee"></div>
<div class="a" style="left:663px;top:433px;width:1px;height:273px;background:#e1e6ee"></div>
<div class="a" style="left:900px;top:433px;width:1px;height:273px;background:#e1e6ee"></div>
<div class="a" style="left:1136px;top:433px;width:1px;height:273px;background:#e1e6ee"></div>
<div class="a" style="left:1372px;top:433px;width:1px;height:273px;background:#e1e6ee"></div>
<div class="a" style="left:1608px;top:433px;width:1px;height:273px;background:#e1e6ee"></div>
<div class="a" style="left:1845px;top:433px;width:1px;height:273px;background:#e1e6ee"></div>
<div class="a" style="left:427px;top:461px;width:1419px;height:2px;background:#e1e6ee"></div>
<div class="a" style="left:427px;top:496px;width:1419px;height:2px;background:#e1e6ee"></div>
<div class="a" style="left:427px;top:531px;width:1419px;height:2px;background:#e1e6ee"></div>
<div class="a" style="left:427px;top:566px;width:1419px;height:2px;background:#e1e6ee"></div>
<div class="a" style="left:427px;top:600.5px;width:1419px;height:2px;background:#e1e6ee"></div>
<div class="a" style="left:427px;top:635.5px;width:1419px;height:2px;background:#e1e6ee"></div>
<div class="a" style="left:427px;top:670px;width:1419px;height:2px;background:#e1e6ee"></div>
<div class="a" style="left:427px;top:705px;width:1419px;height:1px;background:#e1e6ee"></div>
<div class="t" style="left:427px;width:236px;text-align:center;top:440.5px;font-size:11px;font-weight:bold;color:#515a6e;line-height:13px">用能单位名称</div>
<div class="t" style="left:663px;width:237px;text-align:center;top:440.5px;font-size:11px;font-weight:bold;color:#515a6e;line-height:13px">用能时间</div>
<div class="t" style="left:900px;width:236px;text-align:center;top:440.5px;font-size:11px;font-weight:bold;color:#515a6e;line-height:13px">用量(m³)</div>
<div class="t" style="left:1136px;width:236px;text-align:center;top:440.5px;font-size:11px;font-weight:bold;color:#515a6e;line-height:13px">同比用能时间</div>
<div class="t" style="left:1372px;width:236px;text-align:center;top:440.5px;font-size:11px;font-weight:bold;color:#515a6e;line-height:13px">同比用量(m³)</div>
<div class="t" style="left:1608px;width:237px;text-align:center;top:440.5px;font-size:11px;font-weight:bold;color:#515a6e;line-height:13px">同比</div>
<div class="t" style="left:435px;top:473.5px;font-size:11px;line-height:13px;color:#555">智统科技</div>
<div class="t" style="left:671.5px;top:473.5px;font-size:11px;line-height:13px;color:#555">2023/09/07</div>
<div class="t" style="left:900px;width:229px;text-align:right;top:473.5px;font-size:11px;line-height:13px;color:#555">369.79</div>
<div class="t" style="left:1144px;top:473.5px;font-size:11px;line-height:13px;color:#555">2022/09/07</div>
<div class="t" style="left:1372px;width:229px;text-align:right;top:473.5px;font-size:11px;line-height:13px;color:#555">519.55</div>
<div class="t" style="left:1616.5px;top:473.5px;font-size:11px;line-height:13px;color:#19be6b">-28.82%</div>
<div class="t" style="left:435px;top:508.5px;font-size:11px;line-height:13px;color:#555">智统科技</div>
<div class="t" style="left:671.5px;top:508.5px;font-size:11px;line-height:13px;color:#555">2023/09/06</div>
<div class="t" style="left:900px;width:229px;text-align:right;top:508.5px;font-size:11px;line-height:13px;color:#555">378.81</div>
<div class="t" style="left:1144px;top:508.5px;font-size:11px;line-height:13px;color:#555">2022/09/06</div>
<div class="t" style="left:1372px;width:229px;text-align:right;top:508.5px;font-size:11px;line-height:13px;color:#555">568.74</div>
<div class="t" style="left:1616.5px;top:508.5px;font-size:11px;line-height:13px;color:#19be6b">-33.39%</div>
<div class="t" style="left:435px;top:543.5px;font-size:11px;line-height:13px;color:#555">智统科技</div>
<div class="t" style="left:671.5px;top:543.5px;font-size:11px;line-height:13px;color:#555">2023/09/05</div>
<div class="t" style="left:900px;width:229px;text-align:right;top:543.5px;font-size:11px;line-height:13px;color:#555">390.36</div>
<div class="t" style="left:1144px;top:543.5px;font-size:11px;line-height:13px;color:#555">2022/09/05</div>
<div class="t" style="left:1372px;width:229px;text-align:right;top:543.5px;font-size:11px;line-height:13px;color:#555">505.94</div>
<div class="t" style="left:1616.5px;top:543.5px;font-size:11px;line-height:13px;color:#19be6b">-22.84%</div>
<div class="t" style="left:435px;top:578.2px;font-size:11px;line-height:13px;color:#555">智统科技</div>
<div class="t" style="left:671.5px;top:578.2px;font-size:11px;line-height:13px;color:#555">2023/09/04</div>
<div class="t" style="left:900px;width:229px;text-align:right;top:578.2px;font-size:11px;line-height:13px;color:#555">385.29</div>
<div class="t" style="left:1144px;top:578.2px;font-size:11px;line-height:13px;color:#555">2022/09/04</div>
<div class="t" style="left:1372px;width:229px;text-align:right;top:578.2px;font-size:11px;line-height:13px;color:#555">562.13</div>
<div class="t" style="left:1616.5px;top:578.2px;font-size:11px;line-height:13px;color:#19be6b">-31.46%</div>
<div class="t" style="left:435px;top:613.0px;font-size:11px;line-height:13px;color:#555">智统科技</div>
<div class="t" style="left:671.5px;top:613.0px;font-size:11px;line-height:13px;color:#555">2023/09/03</div>
<div class="t" style="left:900px;width:229px;text-align:right;top:613.0px;font-size:11px;line-height:13px;color:#555">440.48</div>
<div class="t" style="left:1144px;top:613.0px;font-size:11px;line-height:13px;color:#555">2022/09/03</div>
<div class="t" style="left:1372px;width:229px;text-align:right;top:613.0px;font-size:11px;line-height:13px;color:#555">471.30</div>
<div class="t" style="left:1616.5px;top:613.0px;font-size:11px;line-height:13px;color:#19be6b">-6.54%</div>
<div class="t" style="left:435px;top:647.8px;font-size:11px;line-height:13px;color:#555">智统科技</div>
<div class="t" style="left:671.5px;top:647.8px;font-size:11px;line-height:13px;color:#555">2023/09/02</div>
<div class="t" style="left:900px;width:229px;text-align:right;top:647.8px;font-size:11px;line-height:13px;color:#555">396.60</div>
<div class="t" style="left:1144px;top:647.8px;font-size:11px;line-height:13px;color:#555">2022/09/02</div>
<div class="t" style="left:1372px;width:229px;text-align:right;top:647.8px;font-size:11px;line-height:13px;color:#555">503.63</div>
<div class="t" style="left:1616.5px;top:647.8px;font-size:11px;line-height:13px;color:#19be6b">-21.25%</div>
<div class="t" style="left:435px;top:682.5px;font-size:11px;line-height:13px;color:#555">智统科技</div>
<div class="t" style="left:671.5px;top:682.5px;font-size:11px;line-height:13px;color:#555">2023/09/01</div>
<div class="t" style="left:900px;width:229px;text-align:right;top:682.5px;font-size:11px;line-height:13px;color:#555">417.03</div>
<div class="t" style="left:1144px;top:682.5px;font-size:11px;line-height:13px;color:#555">2022/09/01</div>
<div class="t" style="left:1372px;width:229px;text-align:right;top:682.5px;font-size:11px;line-height:13px;color:#555">518.76</div>
<div class="t" style="left:1616.5px;top:682.5px;font-size:11px;line-height:13px;color:#19be6b">-19.61%</div>
<div class="a" style="left:427px;top:734px;width:1419px;height:28.5px;background:#f8f8f9;border:1px solid #e1e6ee"></div>
<div class="a" style="left:663px;top:734px;width:1px;height:28.5px;background:#e1e6ee"></div>
<div class="a" style="left:1136px;top:734px;width:1px;height:28.5px;background:#e1e6ee"></div>
<div class="a" style="left:1608px;top:734px;width:1px;height:28.5px;background:#e1e6ee"></div>
<div class="t" style="left:427px;width:236px;text-align:center;top:741.5px;font-size:11px;font-weight:bold;color:#5b69d6;line-height:13px">用量合计</div>
<div class="t" style="left:663px;width:473px;text-align:center;top:741.5px;font-size:11px;font-weight:bold;color:#5b69d6;line-height:13px">2778.36</div>
<div class="t" style="left:1136px;width:472px;text-align:center;top:741.5px;font-size:11px;font-weight:bold;color:#5b69d6;line-height:13px">3650.05</div>
<div class="t" style="left:1608px;width:237px;text-align:center;top:741.5px;font-size:11px;font-weight:bold;color:#19be6b;line-height:13px">-23.88%</div>
<div class="t" style="left:431.5px;top:779px;font-size:12px;color:#555;line-height:14px">共 7 条</div>
<svg class="a" style="left:490px;top:780px" width="9" height="12" viewBox="0 0 9 12" fill="none" stroke="#b5b9c2" stroke-width="1.1"><path d="M6.5 1.5 L2 6 L6.5 10.5"/></svg>
<div class="t" style="left:534px;top:779.5px;font-size:12px;font-weight:bold;color:#409eff;line-height:14px">1</div>
<svg class="a" style="left:575px;top:780px" width="9" height="12" viewBox="0 0 9 12" fill="none" stroke="#8e939c" stroke-width="1.1"><path d="M2.5 1.5 L7 6 L2.5 10.5"/></svg>
<div class="t" style="left:618.5px;top:780px;font-size:12px;color:#555;line-height:14px">前往</div>
<div class="a" style="left:647px;top:774.5px;width:40.5px;height:23.5px;background:#f5f7fa;border:1px solid #e4e7ed;border-radius:3px"></div>
<div class="t" style="left:647px;width:40.5px;text-align:center;top:780px;font-size:12px;color:#555;line-height:14px">1</div>
<div class="t" style="left:691px;top:780px;font-size:12px;color:#555;line-height:14px">页</div>
<div class="a" style="left:708.5px;top:774.5px;width:90px;height:23.5px;background:#f5f7fa;border:1px solid #e4e7ed;border-radius:3px"></div>
<div class="t" style="left:724.5px;top:780px;font-size:12px;color:#555;line-height:14px">10条/页</div>
<svg class="a" style="left:782px;top:783px" width="11" height="7" viewBox="0 0 11 7" fill="none" stroke="#c0c4cc" stroke-width="1"><path d="M1.5 1.5 L5.5 5.2 L9.5 1.5"/></svg>
</body></html>
